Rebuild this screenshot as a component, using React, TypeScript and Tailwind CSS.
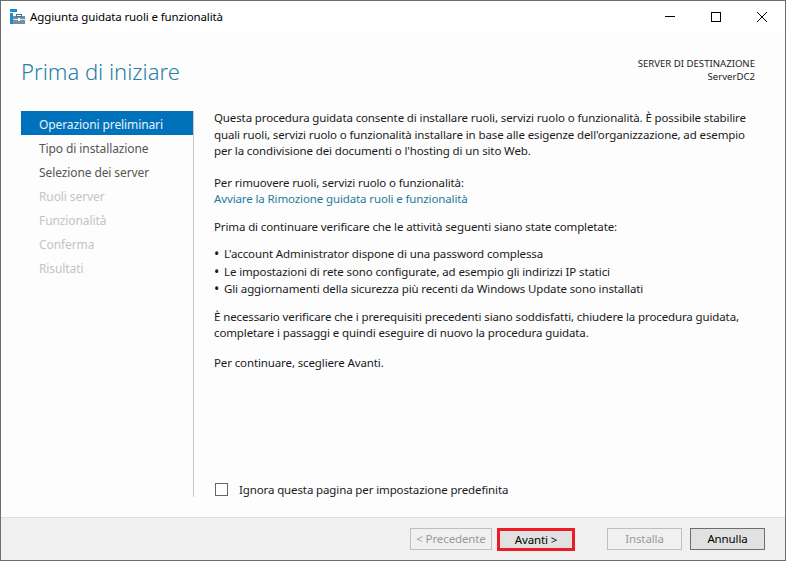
const font = { fontFamily: '"Noto Sans", "Open Sans", sans-serif' };

const steps = [
  { label: 'Tipo di installazione', on: true },
  { label: 'Selezione dei server', on: true },
  { label: 'Ruoli server', on: false },
  { label: 'Funzionalità', on: false },
  { label: 'Conferma', on: false },
  { label: 'Risultati', on: false },
];

const checks = [
  "L'account Administrator dispone di una password complessa",
  'Le impostazioni di rete sono configurate, ad esempio gli indirizzi IP statici',
  'Gli aggiornamenti della sicurezza più recenti da Windows Update sono installati',
];

function WizardIcon() {
  return (
    <svg width="16" height="16" viewBox="0 0 16 16">
      <rect x="0" y="0" width="7" height="3" fill="#1f8ad0" />
      <rect x="0" y="4" width="3" height="11" fill="#1f8ad0" />
      <rect x="3" y="7" width="12" height="8" fill="#6f8fa5" />
      <rect x="6.5" y="5.5" width="5" height="2" fill="none" stroke="#4f6f85" strokeWidth="1" />
      <rect x="3" y="10" width="12" height="1" fill="#dbe6ee" />
      <rect x="8" y="9" width="2" height="3" fill="#ffffff" />
    </svg>
  );
}

export default function App() {
  return (
    <div className="flex h-[561px] w-[786px] flex-col border border-[#6d6d6d] bg-[#fdfdfd] text-[11.5px] tracking-[-0.12px] text-[#1a1a1a]" style={font}>
      {/* Title bar */}
      <div className="flex h-[31px] shrink-0 items-center bg-white pl-[9px]">
        <WizardIcon />
        <span className="ml-[4px] text-black">Aggiunta guidata ruoli e funzionalità</span>
        <div className="ml-auto flex items-center">
          <div className="flex h-[31px] w-[46px] items-center justify-center">
            <div className="h-px w-[10px] bg-black" />
          </div>
          <div className="flex h-[31px] w-[46px] items-center justify-center">
            <div className="h-[10px] w-[10px] border border-black" />
          </div>
          <div className="flex h-[31px] w-[46px] items-center justify-center">
            <svg width="10" height="10" viewBox="0 0 10 10">
              <path d="M0 0L10 10M10 0L0 10" stroke="black" strokeWidth="1" />
            </svg>
          </div>
        </div>
      </div>

      {/* Header */}
      <div className="flex h-[79px] shrink-0 justify-between pl-[20px] pr-[30px]">
        <h1 className="mt-[21px] text-[22px] font-light leading-[36px] tracking-normal text-[#2a7da8]">Prima di iniziare</h1>
        <div className="mt-[25px] text-right text-[9.6px] leading-[13px] tracking-normal text-[#222]">
          <div>SERVER DI DESTINAZIONE</div>
          <div>ServerDC2</div>
        </div>
      </div>

      {/* Body */}
      <div className="flex min-h-0 flex-1 pl-[20px]">
        <nav className="w-[172px] shrink-0 text-[12px] tracking-[-0.1px]">
          <div className="flex h-[24px] items-center bg-[#0072bc] pl-[18px] pt-[3px] text-[#e8f2f9]">Operazioni preliminari</div>
          {steps.map((s) => (
            <div key={s.label} className={`flex h-[24px] items-center pl-[18px] pt-[3px] ${s.on ? 'text-[#555]' : 'text-[#c4c4c4]'}`}>
              {s.label}
            </div>
          ))}
        </nav>
        <div className="h-[386px] w-px shrink-0 bg-[#c9c9c9]" />
        <div className="flex h-[386px] flex-1 flex-col pl-[20px] pr-[24px] leading-[16.5px]">
          <p className="-mt-[1px]">
            Questa procedura guidata consente di installare ruoli, servizi ruolo o funzionalità. È possibile stabilire quali ruoli, servizi ruolo o funzionalità installare in base alle esigenze dell'organizzazione, ad esempio per la condivisione dei documenti o l'hosting di un sito Web.
          </p>
          <p className="mt-[15px]">Per rimuovere ruoli, servizi ruolo o funzionalità:</p>
          <a className="text-[#1f7a9c]">Avviare la Rimozione guidata ruoli e funzionalità</a>
          <p className="mt-[11px]">Prima di continuare verificare che le attività seguenti siano state completate:</p>
          <ul className="mt-[11px] flex flex-col gap-[1px]">
            {checks.map((c) => (
              <li key={c} className="flex">
                <span className="w-[10px] text-[14px] leading-[16px]">•</span>
                {c}
              </li>
            ))}
          </ul>
          <p className="mt-[11px]">
            È necessario verificare che i prerequisiti precedenti siano soddisfatti, chiudere la procedura guidata, completare i passaggi e quindi eseguire di nuovo la procedura guidata.
          </p>
          <p className="mt-[13px]">Per continuare, scegliere Avanti.</p>
          <label className="mt-auto -mb-[1px] flex items-center">
            <span className="ml-[1px] h-[13px] w-[13px] border border-[#666] bg-white" />
            <span className="ml-[11px]">Ignora questa pagina per impostazione predefinita</span>
          </label>
        </div>
      </div>

      {/* Footer */}
      <div className="flex h-[43px] shrink-0 items-center justify-end border-t border-[#dfdfdf] bg-[#f0f0f0] pr-[20px]">
        <button className="h-[22px] w-[82px] border border-[#bfbfbf] text-[#9a9a9a]">&lt; Precedente</button>
        <button className="ml-[5px] h-[23px] w-[78px] border-[3px] border-[#ed1c24] bg-[#e1e1e1] text-black">Avanti &gt;</button>
        <button className="ml-[32px] h-[22px] w-[75px] border border-[#bfbfbf] text-[#9a9a9a]">Installa</button>
        <button className="ml-[8px] h-[22px] w-[75px] border border-[#6d6d6d] bg-[#e1e1e1] text-black">Annulla</button>
      </div>
    </div>
  );
}
